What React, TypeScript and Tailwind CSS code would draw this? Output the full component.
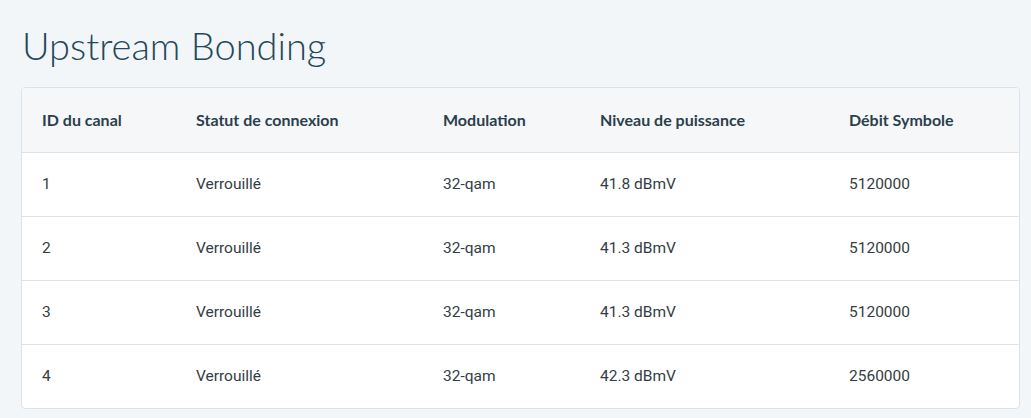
import React from "react";

const rows = [
  { id: "1", statut: "Verrouillé", modulation: "32-qam", niveau: "41.8 dBmV", debit: "5120000" },
  { id: "2", statut: "Verrouillé", modulation: "32-qam", niveau: "41.3 dBmV", debit: "5120000" },
  { id: "3", statut: "Verrouillé", modulation: "32-qam", niveau: "41.3 dBmV", debit: "5120000" },
  { id: "4", statut: "Verrouillé", modulation: "32-qam", niveau: "42.3 dBmV", debit: "2560000" },
];

const cols = ["w-[154px]", "w-[247px]", "w-[157px]", "w-[249px]", "flex-1"];

const App = () => {
  return (
    <div className="min-h-[418px] w-full bg-[#f3f6f8] px-[21px] pt-[23px]">
      <h1 className="font-['Lato',sans-serif] text-[38px] font-light leading-[45px] text-[#24485a] pl-[1px]">
        Upstream Bonding
      </h1>
      <div className="mt-[19px] w-[999px] rounded-[4px] border border-[#dce3e8] bg-white overflow-hidden">
        <div className="flex h-[64px] items-center bg-[#f5f7f9] px-[20px] font-['Lato',sans-serif] text-[16px] font-bold text-[#2b3f4c]">
          {["ID du canal", "Statut de connexion", "Modulation", "Niveau de puissance", "Débit Symbole"].map(
            (h, i) => (
              <div key={h} className={cols[i]}>
                {h}
              </div>
            )
          )}
        </div>
        {rows.map((r) => (
          <div
            key={r.id}
            className="flex h-[64px] items-center border-t border-[#dce3e8] px-[20px] font-['Roboto',sans-serif] text-[15.5px] text-[#333d44]"
          >
            <div className={cols[0]}>{r.id}</div>
            <div className={cols[1]}>{r.statut}</div>
            <div className={cols[2]}>{r.modulation}</div>
            <div className={cols[3]}>{r.niveau}</div>
            <div className={cols[4]}>{r.debit}</div>
          </div>
        ))}
      </div>
    </div>
  );
};

export default App;
